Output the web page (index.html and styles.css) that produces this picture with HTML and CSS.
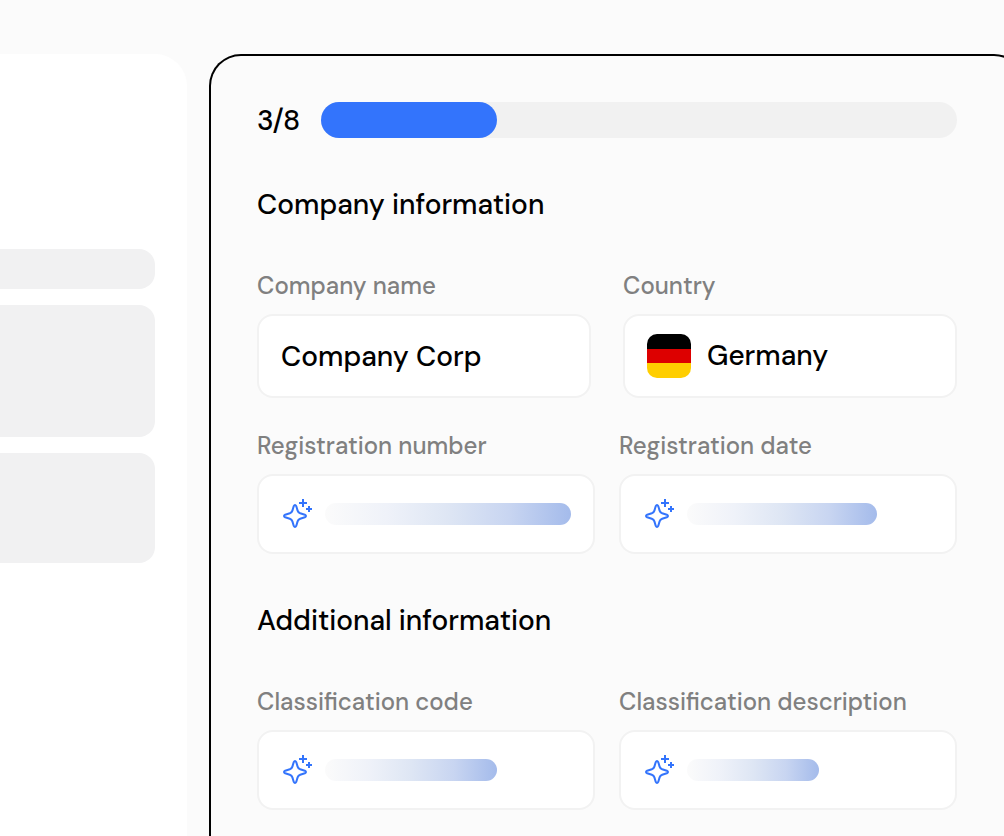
FILE: index.html
```html
<!DOCTYPE html>
<html lang="en">
<head>
<meta charset="utf-8">
<meta name="viewport" content="width=device-width, initial-scale=1">
<title>Company information</title>
<link rel="stylesheet" href="styles.css">
</head>
<body>
<svg class="defs" aria-hidden="true">
  <symbol id="sparkle" viewBox="0 0 32 32">
    <path d="M12.7 8.2Q14 5.8 15.3 8.2L16.6 12.6Q17.2 14.6 19.2 15.3L23.8 16.7Q26.2 18 23.8 19.3L19.2 20.7Q17.2 21.4 16.6 23.4L15.3 27.8Q14 30.2 12.7 27.8L11.4 23.4Q10.8 21.4 8.8 20.7L4.2 19.3Q1.8 18 4.2 16.7L8.8 15.3Q10.8 14.6 11.4 12.6Z"/>
    <path d="M22 1v8M18 5h8M28 8v6M25 11h6"/>
  </symbol>
</svg>
<div class="page">
  <aside class="preview" aria-hidden="true">
    <div class="block block-small"></div>
    <div class="block block-large"></div>
    <div class="block block-medium"></div>
  </aside>
  <main class="panel">
    <form class="form">
      <div class="steps">
        <span class="steps-label" id="steps">3/8</span>
        <div class="track" role="progressbar" aria-labelledby="steps" aria-valuemin="0" aria-valuemax="8" aria-valuenow="3">
          <div class="track-fill"></div>
        </div>
      </div>
      <section class="section">
        <h2 class="title">Company information</h2>
        <div class="rows">
          <div class="row row-wide">
            <div class="field">
              <label class="label" for="name">Company name</label>
              <div class="box box-tall"><input class="control" id="name" type="text" value="Company Corp"></div>
            </div>
            <div class="field">
              <label class="label" for="country">Country</label>
              <div class="box box-tall">
                <span class="flag"></span>
                <select class="control" id="country"><option>Germany</option></select>
              </div>
            </div>
          </div>
          <div class="row">
            <div class="field">
              <label class="label" for="number">Registration number</label>
              <output class="box box-loading" id="number"><svg class="icon"><use href="#sparkle"/></svg><span class="bar" style="width:246px"></span></output>
            </div>
            <div class="field">
              <label class="label" for="date">Registration date</label>
              <output class="box box-loading" id="date"><svg class="icon"><use href="#sparkle"/></svg><span class="bar" style="width:190px"></span></output>
            </div>
          </div>
        </div>
      </section>
      <section class="section">
        <h2 class="title">Additional information</h2>
        <div class="row">
          <div class="field">
            <label class="label" for="code">Classification code</label>
            <output class="box box-loading" id="code"><svg class="icon"><use href="#sparkle"/></svg><span class="bar" style="width:172px"></span></output>
          </div>
          <div class="field">
            <label class="label" for="description">Classification description</label>
            <output class="box box-loading" id="description"><svg class="icon"><use href="#sparkle"/></svg><span class="bar" style="width:132px"></span></output>
          </div>
        </div>
      </section>
    </form>
  </main>
</div>
</body>
</html>
```
FILE: styles.css
```css
* {
  box-sizing: border-box;
}

body {
  margin: 0;
  background: #fbfbfb;
  color: #000;
  font-family: "DM Sans", Inter, sans-serif;
  font-size: 28px;
  font-weight: 500;
  line-height: 38px;
  overflow: hidden;
}

.defs {
  display: none;
}

.page {
  display: flex;
  gap: 22px;
  min-height: 100vh;
  padding-top: 54px;
}

/* Document preview, running off the left edge */
.preview {
  display: flex;
  flex: 0 0 187px;
  flex-direction: column;
  gap: 16px;
  padding: 195px 32px 0 0;
  border-radius: 0 32px 0 0;
  background: #fff;
}

.block {
  border-radius: 0 16px 16px 0;
  background: #f1f1f2;
}

.block-small {
  height: 40px;
}

.block-large {
  height: 132px;
}

.block-medium {
  height: 110px;
}

/* Form panel, running off the right edge */
.panel {
  flex: 1;
  min-width: 0;
  margin-right: -22px;
  padding: 46px 67px 24px 46px;
  border: 2px solid #000;
  border-bottom: 0;
  border-radius: 32px 32px 0 0;
}

.form {
  display: flex;
  flex-direction: column;
  gap: 48px;
}

.steps {
  display: flex;
  height: 36px;
}

.steps-label {
  flex: 0 0 64px;
}

.track {
  flex: 1;
  height: 36px;
  border-radius: 18px;
  background: #f1f1f1;
}

.track-fill {
  width: 27.7%;
  height: 100%;
  border-radius: 18px;
  background: #3374fc;
}

.section {
  display: flex;
  flex-direction: column;
  gap: 46px;
}

.title {
  margin: 0;
  font-size: 28px;
  font-weight: 500;
}

.rows {
  display: flex;
  flex-direction: column;
  gap: 32px;
}

.row {
  display: grid;
  grid-template-columns: repeat(2, minmax(0, 1fr));
  gap: 24px;
}

.row-wide {
  gap: 32px;
}

.field {
  display: flex;
  flex-direction: column;
  gap: 12px;
}

.label {
  color: #808080;
  font-size: 24px;
  line-height: 32px;
  white-space: nowrap;
}

.box {
  display: flex;
  align-items: center;
  gap: 16px;
  height: 80px;
  padding: 0 22px;
  border: 2px solid #f2f2f2;
  border-radius: 16px;
  background: #fff;
}

.box-tall {
  height: 84px;
}

.box-loading {
  gap: 12px;
}

.control {
  flex: 1;
  min-width: 0;
  height: 44px;
  padding: 0;
  border: 0;
  outline: 0;
  background: transparent;
  color: inherit;
  font: inherit;
  appearance: none;
}

.flag {
  flex: none;
  width: 44px;
  height: 44px;
  border-radius: 10px;
  background: linear-gradient(#000 33.3%, #d00 33.3% 66.6%, #ffce00 66.6%);
}

.icon {
  flex: none;
  width: 32px;
  height: 32px;
  fill: none;
  stroke: #3374fc;
  stroke-width: 2;
  stroke-linejoin: round;
}

.bar {
  height: 22px;
  border-radius: 11px;
  background: linear-gradient(90deg, #fbfbfb, #eff2f9 25%, #dee6f4 50%, #c8d5f1 75%, #a4bbeb);
}
```
